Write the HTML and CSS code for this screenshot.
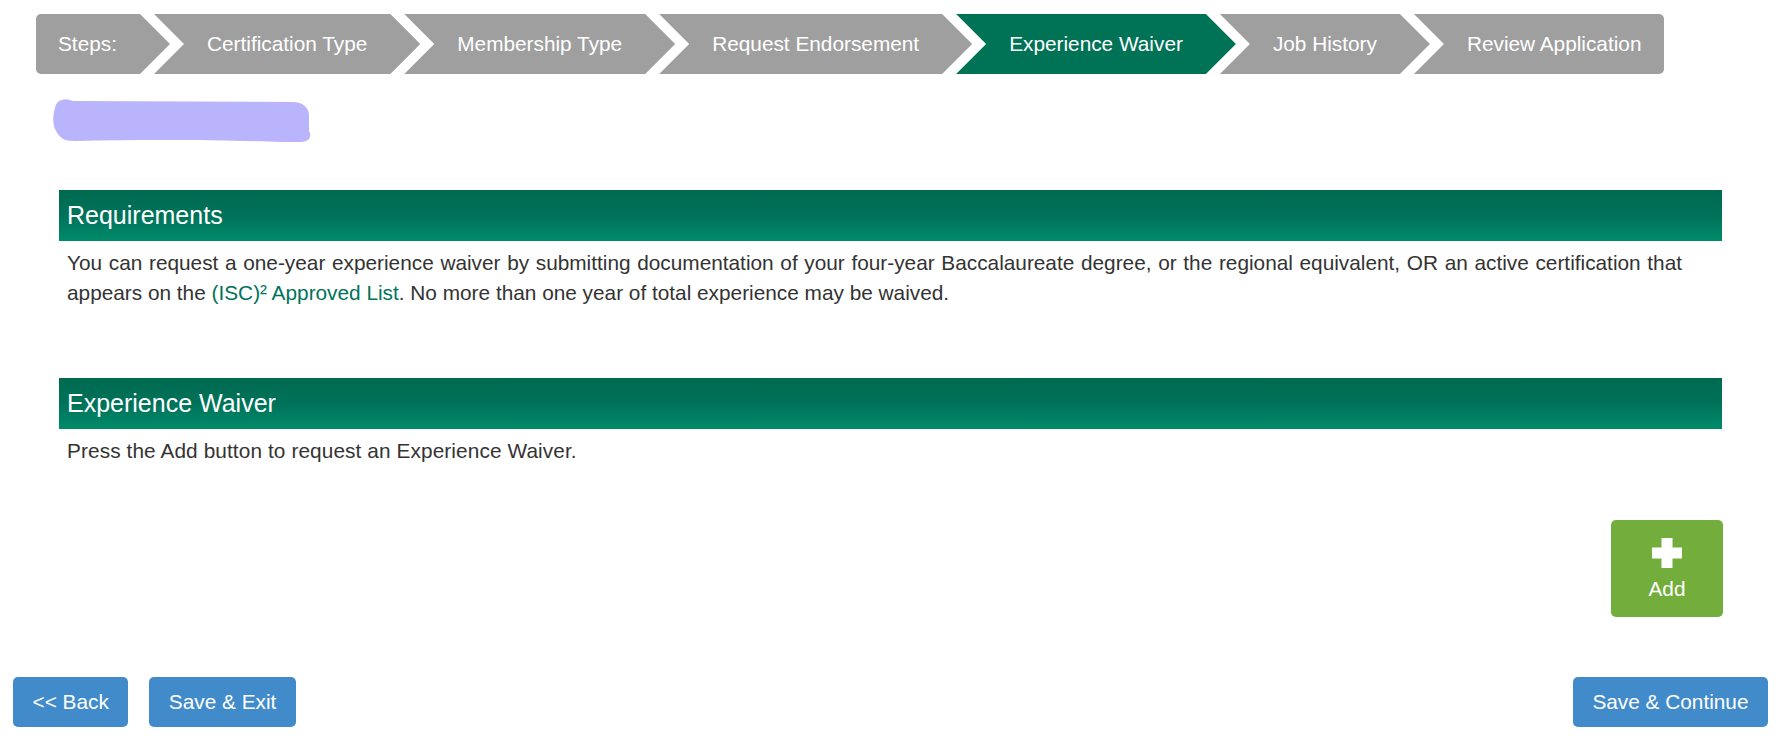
FILE: index.html
```html
<!DOCTYPE html>
<html lang="en">
<head>
<meta charset="utf-8">
<title>Experience Waiver</title>
<link rel="stylesheet" href="styles.css">
</head>
<body>
<nav class="steps">
  <div class="step step-first">Steps:</div>
  <div class="step">Certification Type</div>
  <div class="step">Membership Type</div>
  <div class="step">Request Endorsement</div>
  <div class="step step-active">Experience Waiver</div>
  <div class="step">Job History</div>
  <div class="step step-last">Review Application</div>
</nav>

<svg class="scribble" width="260" height="46" viewBox="0 0 260 46" aria-hidden="true">
  <path d="M10 2 C14 0 18 2 21 3 L240 4 C252 4 256 10 257 16 L257 33 C260 38 258 44 248 44 L230 44 C180 42 100 41 22 43 C12 43 8 40 4 33 C0 26 1 16 3 10 C4 5 7 2 10 2 Z" fill="#b9b4fb"/>
</svg>

<main class="content">
  <h3 class="panel-head">Requirements</h3>
  <p class="panel-text panel-text-justify">You can request a one-year experience waiver by submitting documentation of your four-year Baccalaureate degree, or the regional equivalent, OR an active certification that appears on the <a class="link" href="#">(ISC)² Approved List</a>. No more than one year of total experience may be waived.</p>

  <h3 class="panel-head panel-head-second">Experience Waiver</h3>
  <p class="panel-text">Press the Add button to request an Experience Waiver.</p>

  <div class="add-row">
    <button class="btn-add" type="button">
      <svg class="plus" width="30" height="30" viewBox="0 0 30 30" aria-hidden="true">
        <rect x="9.5" y="0" width="11" height="30" fill="#fff"/>
        <rect x="0" y="9.5" width="30" height="11" fill="#fff"/>
      </svg>
      <span class="add-label">Add</span>
    </button>
  </div>
</main>

<footer class="footer">
  <div class="footer-left">
    <button class="btn" type="button">&lt;&lt; Back</button>
    <button class="btn" type="button">Save &amp; Exit</button>
  </div>
  <button class="btn" type="button">Save &amp; Continue</button>
</footer>
</body>
</html>
```

FILE: styles.css
```css
html, body {
  margin: 0;
  padding: 0;
  background: #ffffff;
}

body {
  font-family: "Liberation Sans", Arial, sans-serif;
  font-size: 20.8px;
  line-height: 1.428571;
  color: #333333;
}

/* ---------- Steps breadcrumb ---------- */
.steps {
  display: flex;
  margin: 14px 0 0 36px;
  height: 60px;
}

.step {
  height: 60px;
  line-height: 60px;
  padding: 0 53px;
  background: #9f9f9f;
  color: #ffffff;
  white-space: nowrap;
  margin-left: -16px;
  clip-path: polygon(0 0, calc(100% - 30px) 0, 100% 50%, calc(100% - 30px) 100%, 0 100%, 30px 50%);
}

.step-first {
  margin-left: 0;
  padding-left: 22px;
  border-radius: 5px 0 0 5px;
  clip-path: polygon(0 0, calc(100% - 30px) 0, 100% 50%, calc(100% - 30px) 100%, 0 100%);
}

.step-last {
  padding-right: 23px;
  border-radius: 0 5px 5px 0;
  clip-path: polygon(0 0, 100% 0, 100% 100%, 0 100%, 30px 50%);
}

.step-active {
  background: #007256;
}

/* ---------- Redaction scribble ---------- */
.scribble {
  display: block;
  margin: 24px 0 0 52px;
}

/* ---------- Content ---------- */
.content {
  margin: 46px 64px 0 59px;
}

.panel-head {
  margin: 0;
  height: 51px;
  box-sizing: border-box;
  padding: 12px 8px;
  font-size: 25px;
  line-height: 27px;
  font-weight: normal;
  color: #ffffff;
  background: linear-gradient(to bottom, #006a50 0%, #00725a 50%, #008b69 100%);
}

.panel-head-second {
  margin-top: 70.6px;
}

.panel-text {
  margin: 7px 0 0;
  padding: 0 8px;
  letter-spacing: 0.1px;
}

.panel-text-justify {
  text-align: justify;
  padding-right: 40px;
  letter-spacing: 0;
}

.link {
  color: #00735a;
  text-decoration: none;
}

/* ---------- Add button ---------- */
.add-row {
  display: flex;
  justify-content: flex-end;
  margin-top: 54px;
}

.btn-add {
  display: flex;
  flex-direction: column;
  align-items: center;
  width: 112px;
  height: 97px;
  box-sizing: border-box;
  padding: 18px 0 0;
  margin-right: -1px;
  border: 0;
  border-radius: 5px;
  background: #73ae3c;
  color: #ffffff;
  font-family: "Liberation Sans", Arial, sans-serif;
  font-size: 20.8px;
  line-height: 24px;
  cursor: pointer;
}

.plus {
  display: block;
  flex: none;
}

.add-label {
  margin-top: 9px;
}

/* ---------- Footer buttons ---------- */
.footer {
  display: flex;
  justify-content: space-between;
  align-items: center;
  margin: 60px 18px 0 13px;
}

.footer-left {
  display: flex;
  gap: 21px;
}

.btn {
  height: 50px;
  box-sizing: border-box;
  padding: 13px 19.5px;
  border: 0;
  border-radius: 5px;
  background: #428bca;
  color: #ffffff;
  font-family: "Liberation Sans", Arial, sans-serif;
  font-size: 20.8px;
  line-height: 24px;
  white-space: nowrap;
  cursor: pointer;
}
```
